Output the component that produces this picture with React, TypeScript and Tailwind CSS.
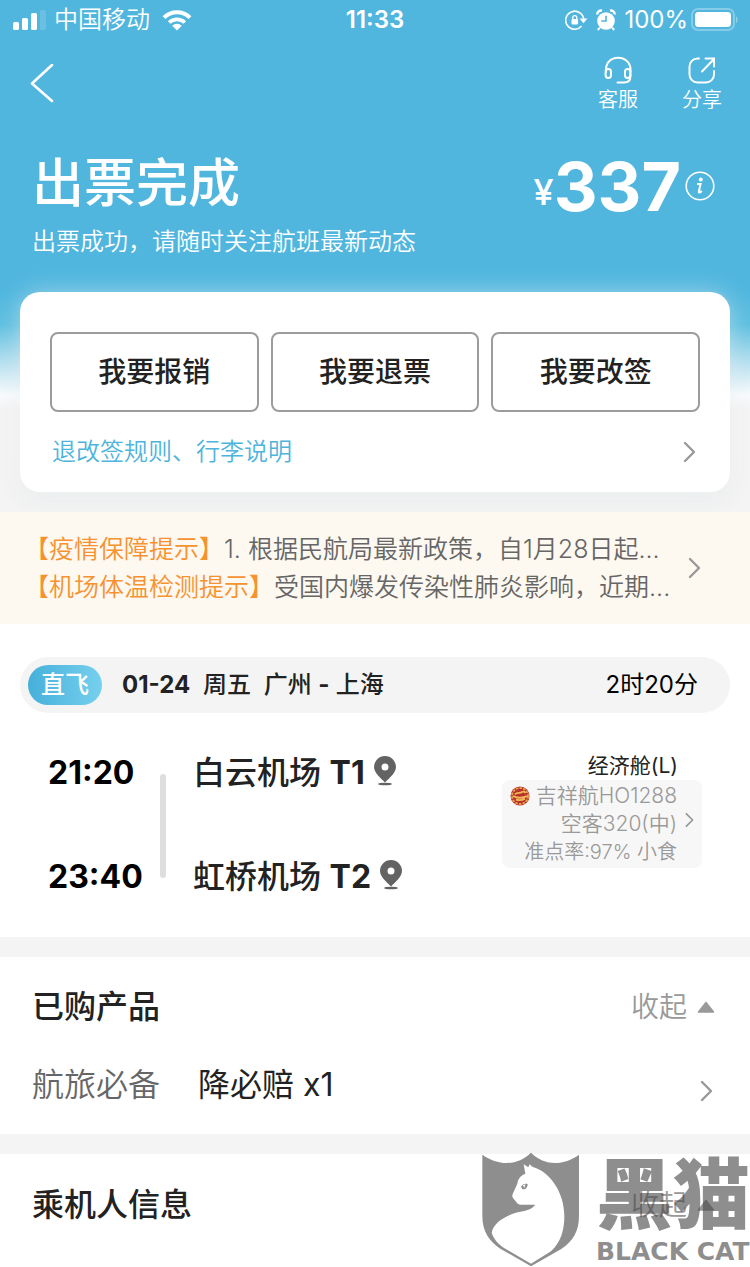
import { ReactNode } from "react";

function Chevron({ className = "" }: { className?: string }) {
  return (
    <svg className={className} width="13" height="22" viewBox="0 0 13 22" fill="none" aria-hidden="true">
      <path d="M2 2l9 9-9 9" stroke="currentColor" strokeWidth="2.4" strokeLinecap="round" strokeLinejoin="round" />
    </svg>
  );
}

function StatusBar() {
  return (
    <div className="grid grid-cols-3 items-center h-10 px-3 text-2xl">
      <div className="flex items-center gap-2 whitespace-nowrap font-[350]">
        <svg width="34" height="20" viewBox="0 0 34 20" fill="#fff" aria-hidden="true">
          <rect x="1" y="12" width="6" height="8" rx="1.6" />
          <rect x="10" y="8" width="6" height="12" rx="1.6" />
          <rect x="19" y="3" width="6" height="17" rx="1.6" />
          <rect x="28" y="0" width="6" height="20" rx="1.6" opacity=".15" />
        </svg>
        <span>中国移动</span>
        <svg className="ml-1" width="30" height="22" viewBox="0 0 30 22" fill="none" stroke="#fff" aria-hidden="true">
          <path d="M2 8.6a18.4 18.4 0 0 1 26 0" strokeWidth="4" />
          <path d="M7.2 13.6a11 11 0 0 1 15.6 0" strokeWidth="3.6" />
          <path d="M15 21.6l-4.8-4.8a6.8 6.8 0 0 1 9.6 0z" fill="#fff" stroke="none" />
        </svg>
      </div>
      <span className="text-center font-semibold">11:33</span>
      <div className="flex items-center justify-end gap-2">
        <svg width="23" height="20" viewBox="0 0 23 20" fill="none" aria-hidden="true">
          <path d="M16.6 16A9 9 0 1 1 18.7 10" stroke="#fff" strokeWidth="1.6" />
          <path d="M14.6 8.6h7.8l-3.9 4.6z" fill="#fff" />
          <rect x="6.5" y="9" width="6.6" height="5.4" rx=".8" fill="#fff" />
          <path d="M7.8 9.4V7.6a2 2 0 0 1 4 0v1.8" stroke="#fff" strokeWidth="1.3" />
        </svg>
        <svg width="20" height="22" viewBox="0 0 20 22" fill="none" stroke="#fff" aria-hidden="true">
          <circle cx="10" cy="12" r="8.8" fill="#fff" stroke="none" />
          <path d="M1.2 5.6A4 4 0 0 1 6 1.6M18.8 5.6A4 4 0 0 0 14 1.6" strokeWidth="2.4" />
          <path d="M3.8 18.6l-2 2.4M16.2 18.6l2 2.4" strokeWidth="2" />
          <path d="M10 6.8V12H5.2" stroke="#50b6de" strokeWidth="1.6" />
        </svg>
        <span>100%</span>
        <svg className="-ml-1.5" width="48" height="24" viewBox="0 0 48 24" fill="none" aria-hidden="true">
          <rect x="2" y="1" width="42" height="21" rx="6" stroke="#fff" strokeOpacity=".3" strokeWidth="2" />
          <rect x="5" y="4" width="36" height="15" rx="3.4" fill="#fff" />
          <path d="M46 8.5c2 1 2 5.5 0 6.5z" fill="#fff" fillOpacity=".4" />
        </svg>
      </div>
    </div>
  );
}

function Header() {
  return (
    <header className="text-white">
      <StatusBar />
      <div className="flex items-start justify-between pt-4 px-7">
        <button type="button" aria-label="返回" className="pt-2">
          <svg width="28" height="40" viewBox="0 0 28 40" fill="none" aria-hidden="true">
            <path d="M24 1L4 19.5L24 37" stroke="#fff" strokeWidth="2.6" strokeLinecap="round" strokeLinejoin="round" />
          </svg>
        </button>
        <div className="flex gap-11 text-xl leading-7 font-[350]">
          <button type="button" className="flex flex-col items-center gap-0.5">
            <svg width="28" height="28" viewBox="0 0 28 28" fill="none" stroke="#fff" strokeWidth="2" strokeLinecap="round" aria-hidden="true">
              <path d="M2 16V13.5C2 6.5 7 1.8 14 1.8S26.5 6.5 26.5 13.5V16" />
              <rect x="1.6" y="13" width="5.4" height="9" rx="2.7" />
              <rect x="21" y="13" width="5.4" height="9" rx="2.7" />
              <path d="M26.4 18v2.5c0 4-2.7 6-6.4 6H13.5" />
            </svg>
            客服
          </button>
          <button type="button" className="flex flex-col items-center gap-0.5">
            <svg width="28" height="28" viewBox="0 0 28 28" fill="none" stroke="#fff" strokeWidth="2" strokeLinecap="round" aria-hidden="true">
              <path d="M11 2.5H9.5a8 8 0 0 0-8 8V18.5a8 8 0 0 0 8 8H18a8 8 0 0 0 8-8V15" />
              <path d="M14 15.5L26 3M17.5 2.5H26V10.5" />
            </svg>
            分享
          </button>
        </div>
      </div>
      <div className="flex items-start justify-between pl-8 pr-[35px] pt-10">
        <h1 className="text-[52px] leading-[60px] font-medium">出票完成</h1>
        <div className="flex items-center gap-1">
          <div className="flex items-center leading-[52px]">
            <span className="pt-3 text-[36px] font-medium">¥</span>
            <span className="text-[68px] font-bold">337</span>
          </div>
          <button type="button" aria-label="价格明细">
            <svg width="30" height="30" viewBox="0 0 30 30" fill="none" aria-hidden="true">
              <circle cx="15" cy="15" r="13.8" stroke="#fff" strokeWidth="1.6" />
              <circle cx="15.8" cy="8.6" r="2" fill="#fff" />
              <path d="M12 13h3.6l-1.8 7.6c-.2 1.6 1.7 1 3-.7" stroke="#fff" strokeWidth="2" />
            </svg>
          </button>
        </div>
      </div>
      <p className="pl-8 pt-1 text-2xl leading-10 font-[350]">出票成功，请随时关注航班最新动态</p>
    </header>
  );
}

const ACTIONS = ["我要报销", "我要退票", "我要改签"];

function ActionCard() {
  return (
    <section className="mx-5 mt-[30px] rounded-[20px] bg-white px-[30px] pt-10 pb-5 shadow-[0_0_24px_rgba(255,255,255,0.45),0_8px_24px_rgba(60,80,120,0.07)]">
      <div className="grid grid-cols-3 gap-3">
        {ACTIONS.map((label) => (
          <button key={label} type="button" className="h-20 rounded-lg border-2 border-[#9c9c9c] text-[28px] font-medium text-[#222]">
            {label}
          </button>
        ))}
      </div>
      <a href="#rules" className="mt-5 flex items-center justify-between pl-0.5 text-2xl leading-10 font-[350] text-[#4eb4dc]">
        <span>退改签规则、行李说明</span>
        <Chevron className="mr-1 text-[#999]" />
      </a>
    </section>
  );
}

function Notice() {
  return (
    <a href="#notice" className="mt-5 flex items-center justify-between bg-[#fdf8f0] py-[18px] pl-6 pr-[49px] text-[25px] leading-[38px] font-[350] text-[#666]">
      <span className="min-w-0 whitespace-nowrap">
        <span className="block">
          <span className="text-[#f6922f]">【疫情保障提示】</span>
          1. 根据民航局最新政策，自1月28日起...
        </span>
        <span className="block">
          <span className="text-[#f6922f]">【机场体温检测提示】</span>
          受国内爆发传染性肺炎影响，近期...
        </span>
      </span>
      <Chevron className="shrink-0 text-[#999]" />
    </a>
  );
}

function Pin() {
  return (
    <svg className="mb-1" width="24" height="32" viewBox="0 0 24 32" aria-hidden="true">
      <path fillRule="evenodd" fill="#636363" d="M12 1a11 11 0 0 1 11 11c0 5.4-6 10.5-11 15.5C7 22.5 1 17.4 1 12A11 11 0 0 1 12 1zm0 7.5a3.5 3.5 0 1 0 0 7 3.5 3.5 0 0 0 0-7z" />
      <ellipse cx="12" cy="29" rx="7" ry="1.3" fill="#636363" />
    </svg>
  );
}

function Flight() {
  return (
    <section className="bg-white pt-[33px] pb-[37px]">
      <div className="mx-5 flex h-14 items-center rounded-full bg-[#f4f4f4] pl-2 pr-8 text-2xl text-[#222]">
        <span className="flex h-10 items-center rounded-full bg-linear-to-r from-[#45b0da] to-[#76d0ee] px-[13px] font-medium text-white">直飞</span>
        <span className="ml-5 whitespace-pre font-medium">
          <b className="font-bold">01-24</b>{"  周五  广州 "}<b className="font-bold">-</b>{" 上海"}
        </span>
        <span className="ml-auto text-black">2时20分</span>
      </div>
      <div className="flex justify-between pt-[37px] px-12">
        <div className="flex">
          <div className="flex w-[93px] flex-col justify-between text-[32px] leading-[46px] font-bold text-black">
            <time>21:20</time>
            <time>23:40</time>
          </div>
          <div className="mx-[19px] mt-6 h-[104px] w-1.5 rounded-full bg-[#dedede]" />
          <div className="flex h-[150px] flex-col justify-between pl-2 text-[32px] leading-[46px] font-medium text-[#222]">
            <div className="flex items-center gap-2">
              <span>白云机场 <b className="font-bold">T1</b></span>
              <Pin />
            </div>
            <div className="flex items-center gap-2">
              <span>虹桥机场 <b className="font-bold">T2</b></span>
              <Pin />
            </div>
          </div>
        </div>
        <div className="pt-0.5 text-right text-[21px] leading-7">
          <p className="pr-6 text-[#222]">经济舱(L)</p>
          <a href="#flight" className="flex items-center justify-end gap-2 rounded-lg bg-[#f7f7f7] py-0.5 px-2 text-[#999]">
            <span className="font-[350]">
              <span className="flex items-center justify-end gap-1.5">
                <svg width="20" height="20" viewBox="0 0 20 20" fill="none" aria-hidden="true">
                  <circle cx="10" cy="10" r="9.5" fill="#b8322c" />
                  <circle cx="10" cy="10" r="8" stroke="#e7a54c" strokeWidth="1.8" strokeDasharray="2.5 1.2" />
                  <path d="M3 10c3 2 9 2.6 14 .2M5 8.5c2-3 5-.5 7-2.5 2-1 3 0 3.500 1M6 13.5c3 1 6 .8 9-.8" stroke="#f0b95a" strokeWidth="1.9" />
                </svg>
                吉祥航HO1288
              </span>
              <span className="block">空客320(中)</span>
              <span className="block text-xl leading-7">准点率:97% 小食</span>
            </span>
            <svg className="mb-2" width="9" height="16" viewBox="0 0 13 22" fill="none" aria-hidden="true">
              <path d="M2 2l9 9-9 9" stroke="#999" strokeWidth="2.5" strokeLinecap="round" strokeLinejoin="round" />
            </svg>
          </a>
        </div>
      </div>
    </section>
  );
}

function SectionTitle({ children }: { children: ReactNode }) {
  return (
    <div className="flex items-center justify-between">
      <h2 className="text-[32px] leading-[46px] font-medium text-[#222]">{children}</h2>
      <button type="button" className="flex items-center gap-2.5 text-[28px] font-[350] text-[#999]">
        收起
        <svg width="18" height="12" viewBox="0 0 18 12" aria-hidden="true">
          <path d="M9 1.5L16.5 11H1.5z" fill="#999" stroke="#999" strokeWidth="1.5" strokeLinejoin="round" />
        </svg>
      </button>
    </div>
  );
}

function Products() {
  return (
    <section className="mt-5 bg-white pl-8 pr-[35px] pt-[27px] pb-[26px]">
      <SectionTitle>已购产品</SectionTitle>
      <a href="#product" className="mt-8 flex items-center text-[32px] leading-[46px]">
        <span className="w-[166px] font-[350] text-[#666]">航旅必备</span>
        <span className="text-[#222]">降必赔 x1</span>
        <Chevron className="ml-auto mt-3 mr-0.5 text-[#999]" />
      </a>
    </section>
  );
}

function BlackCat() {
  return (
    <div className="pointer-events-none absolute -top-0.5 right-0 flex gap-4 text-[#464445] opacity-60">
      <svg width="98" height="116" viewBox="33 36 294 348" aria-hidden="true">
        <path
          fillRule="evenodd"
          fill="currentColor"
          d="M34 44C82 78 140 78 180 38C220 78 277 78 324 44V226C324 276 306 303 272 326L180 379L88 326C54 303 34 276 34 226ZM62 278C70 302 88 318 108 329L180 371L240 334C270 306 280 270 280 228C280 160 240 96 184 80L176 73L172 82L158 73L163 101C148 107 141 117 139 131L125 162C122 170 126 174 129 178L138 189C142 194 148 194 156 194H193C178 212 163 211 140 217C105 227 68 246 62 278Z"
        />
        <path fill="currentColor" fillRule="evenodd" d="M150 141C154 131 163 130 170 132C170 143 162 151 154 147ZM156 136l4 8 3-11z" />
      </svg>
      <div className="whitespace-nowrap">
        <div className="text-[77px] leading-[86px] font-black">黑猫</div>
        <div className="font-['DejaVu_Sans',sans-serif] text-[25px] leading-7 font-bold">BLACK CAT</div>
      </div>
    </div>
  );
}

function Passengers() {
  return (
    <section className="relative mt-5 bg-white pl-8 pr-[35px] pt-7 pb-10">
      <SectionTitle>乘机人信息</SectionTitle>
      <BlackCat />
    </section>
  );
}

export default function App() {
  return (
    <main className="min-h-screen overflow-hidden bg-[#f4f4f4] font-['Inter','Noto_Sans_CJK_SC',sans-serif]">
      <div className="bg-[linear-gradient(#50b6de_0,#50b6de_290px,#5fc0e1_325px,#b5e0f0_362px,#f8fbfc_395px,#f4f4f4_410px)]">
        <Header />
        <ActionCard />
      </div>
      <Notice />
      <Flight />
      <Products />
      <Passengers />
    </main>
  );
}
